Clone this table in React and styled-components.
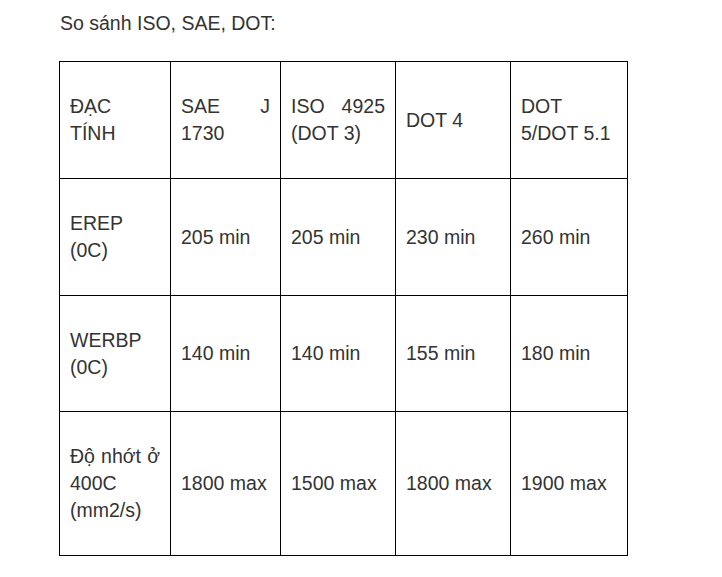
import React from 'react';
import styled, { createGlobalStyle } from 'styled-components';

const GlobalStyle = createGlobalStyle`
    html, body {
        margin: 0;
        padding: 0;
        background: #fff;
    }
    body {
        font-family: "Liberation Sans", Arial, sans-serif;
        color: #333;
    }
`;

const Page = styled.div`
    padding: 10px 0 0 59px;
`;

const Title = styled.p`
    margin: 0 0 24px 0;
    font-size: 19.5px;
    line-height: 27px;
    padding-left: 1px;
`;

const Table = styled.table`
    border-collapse: collapse;
    table-layout: fixed;
    width: 568px;
`;

const Row = styled.tr`
    height: ${(p) => p.$h}px;
`;

const Cell = styled.td`
    border: 1px solid #000;
    padding: 0 10px;
    vertical-align: middle;
    text-align: justify;
    font-size: 19.5px;
    line-height: 27px;
    color: #333;
`;

const widths = [111, 110, 115, 115, 117];

const rows = [
    { h: 117, cells: ['ĐẠC TÍNH', 'SAE J 1730', 'ISO 4925 (DOT 3)', 'DOT 4', 'DOT 5/DOT 5.1'] },
    { h: 117, cells: ['EREP (0C)', '205 min', '205 min', '230 min', '260 min'] },
    { h: 116, cells: ['WERBP (0C)', '140 min', '140 min', '155 min', '180 min'] },
    { h: 144, cells: ['Độ nhớt ở 400C (mm2/s)', '1800 max', '1500 max', '1800 max', '1900 max'] },
];

export default function App() {
    return (
        <>
            <GlobalStyle />
            <Page>
                <Title>So sánh ISO, SAE, DOT:</Title>
                <Table>
                    <colgroup>
                        {widths.map((w, i) => (
                            <col key={i} style={{ width: w }} />
                        ))}
                    </colgroup>
                    <tbody>
                        {rows.map((r, i) => (
                            <Row key={i} $h={r.h}>
                                {r.cells.map((c, j) => (
                                    <Cell key={j}>{c}</Cell>
                                ))}
                            </Row>
                        ))}
                    </tbody>
                </Table>
            </Page>
        </>
    );
}
